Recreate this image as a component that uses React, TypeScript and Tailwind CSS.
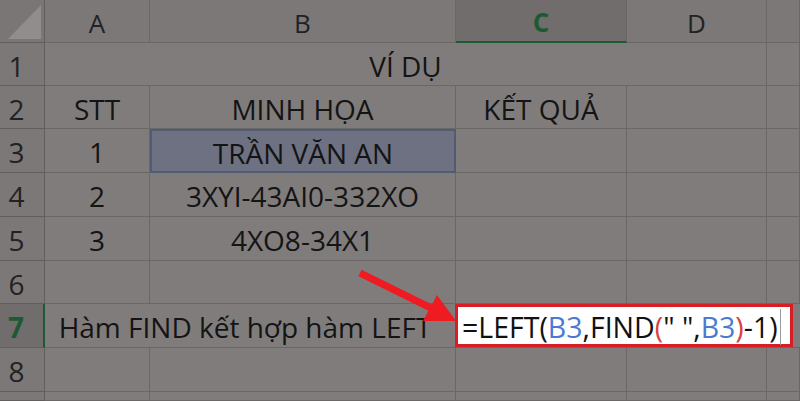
import type { ReactNode } from 'react';

const line = 'border-[#6b6767]';

type P = { children?: ReactNode; className?: string; tone?: string };

function Head({ children, className = '', tone = 'bg-[#7c7878] text-[#222]' }: P) {
  return (
    <div
      className={`flex items-center justify-center border-r pt-[3px] text-[26px] leading-none ${tone} ${className}`}
    >
      {children}
    </div>
  );
}

function RowNum({ children, className = 'border-r border-b border-[#625e5e]', tone = 'bg-[#7c7878] text-[#222]' }: P) {
  return (
    <div
      className={`flex items-center justify-center pr-[11px] pt-[3px] text-[28px] leading-none ${tone} ${className}`}
    >
      {children}
    </div>
  );
}

function Cell({ children, className = `border-r border-b ${line}`, tone = 'bg-[#807c7c]' }: P) {
  return (
    <div
      className={`flex items-center justify-center pt-[3px] text-[28px] leading-none text-[#141414] ${tone} ${className}`}
    >
      {children}
    </div>
  );
}

function Corner() {
  return (
    <div className="border-r border-b border-[#625e5e] bg-[#7a7676]">
      <svg width="44" height="42" viewBox="0 0 44 42">
        <polygon points="8,39 41,39 41,5" fill="#918d8d" />
      </svg>
    </div>
  );
}

export default function App() {
  return (
    <div
      className="relative h-[401px] w-[800px] overflow-hidden bg-[#807c7c]"
      style={{ fontFamily: '"Open Sans", "Noto Sans", sans-serif' }}
    >
      <div className="grid grid-cols-[45px_105px_306px_171px_140px_33px] grid-rows-[43px_43px_43px_44px_44px_44px_43px_44px_44px_9px]">
        {/* column headers */}
        <Corner />
        <Head className={`border-b ${line}`}>A</Head>
        <Head className={`border-b ${line}`}>B</Head>
        <Head
          className="border-r-[#6b6767] border-b-2 border-b-[#1d5a34] font-bold"
          tone="bg-[#716d6d] text-[#1d5a34]"
        >
          C
        </Head>
        <Head className={`border-b ${line}`}>D</Head>
        <Head className={`border-b ${line}`} />

        {/* row 1 */}
        <RowNum>1</RowNum>
        <Cell className={`col-span-4 border-r border-b ${line}`}>VÍ DỤ</Cell>
        <Cell />

        {/* row 2 */}
        <RowNum>2</RowNum>
        <Cell>STT</Cell>
        <Cell>MINH HỌA</Cell>
        <Cell>KẾT QUẢ</Cell>
        <Cell />
        <Cell />

        {/* row 3 */}
        <RowNum>3</RowNum>
        <Cell>1</Cell>
        <Cell className="border-2 border-[#505b74]" tone="bg-[#6d7181]">
          TRẦN VĂN AN
        </Cell>
        <Cell />
        <Cell />
        <Cell />

        {/* row 4 */}
        <RowNum>4</RowNum>
        <Cell>2</Cell>
        <Cell>3XYI-43AI0-332XO</Cell>
        <Cell />
        <Cell />
        <Cell />

        {/* row 5 */}
        <RowNum>5</RowNum>
        <Cell>3</Cell>
        <Cell>4XO8-34X1</Cell>
        <Cell />
        <Cell />
        <Cell />

        {/* row 6 */}
        <RowNum>6</RowNum>
        <Cell />
        <Cell />
        <Cell />
        <Cell />
        <Cell />

        {/* row 7 */}
        <RowNum
          className="border-b border-b-[#625e5e] border-r-2 border-r-[#1d5a34] font-bold"
          tone="bg-[#716d6d] text-[#1d5a34]"
        >
          7
        </RowNum>
        <Cell className={`col-span-2 border-r border-b ${line} pr-[10px]`}>Hàm FIND kết hợp hàm LEFT</Cell>
        <div className={`col-span-3 flex border-b ${line} bg-[#807c7c]`}>
          <div className="ml-[-1px] mr-[7px] flex flex-1 items-center border-[3px] border-[#d81e24] bg-white pl-[4px] pt-[3px] text-[28.5px] leading-none text-[#111]">
            <span>
              =LEFT(<span className="text-[#4a7bd4]">B3</span>,FIND
              <span className="text-[#d9413f]">(</span>" ",
              <span className="text-[#4a7bd4]">B3</span>
              <span className="text-[#d9413f]">)</span>-1)
            </span>
            <span className="ml-[2px] h-[36px] w-px bg-[#9a9a9a]" />
          </div>
        </div>

        {/* row 8 */}
        <RowNum>8</RowNum>
        <Cell />
        <Cell />
        <Cell />
        <Cell />
        <Cell />

        {/* row 9 */}
        <RowNum />
        <Cell />
        <Cell />
        <Cell />
        <Cell />
        <Cell />
      </div>

      {/* red arrow */}
      <svg className="absolute left-0 top-0" width="800" height="401" viewBox="0 0 800 401">
        <line x1="360" y1="273" x2="433" y2="309" stroke="#ee1c22" strokeWidth="7" />
        <polygon points="456,321 423,321 437,295" fill="#ee1c22" />
      </svg>
    </div>
  );
}
